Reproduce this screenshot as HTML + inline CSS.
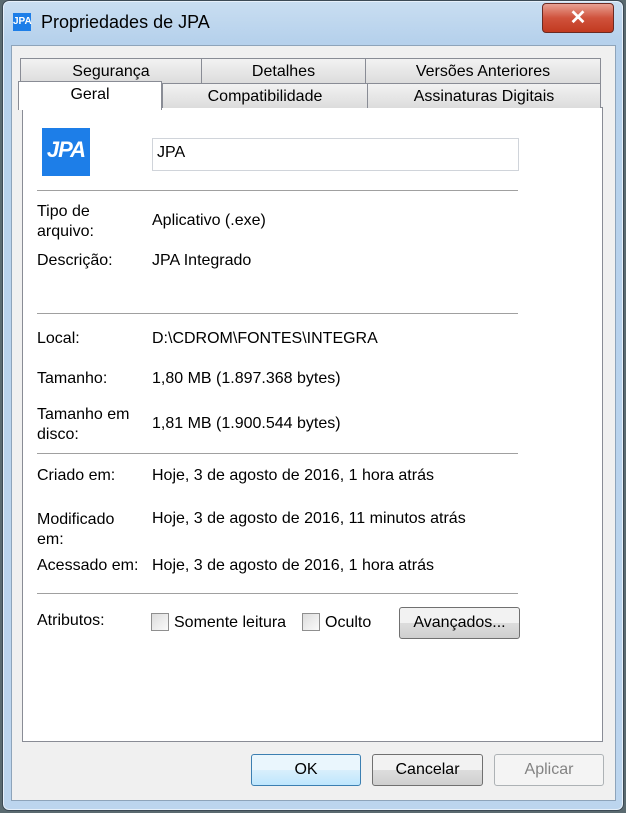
<!DOCTYPE html><html><head><style>
body{margin:0;width:626px;height:813px;overflow:hidden;background:#5a6a70;font-family:"Liberation Sans",sans-serif;font-size:16px;color:#000}
.a{position:absolute}
.win{left:2px;top:0;width:620px;height:809px;border:1px solid #3c4a55;border-radius:7px;background:linear-gradient(#c9def1,#b6d1ec 40px,#bcd5ee);box-shadow:inset 0 0 0 1px #e6f0fa}
.body{left:11px;top:45px;width:603px;height:754px;background:#f0f0f0;border:1px solid #8ea4ba}
.tab{background:linear-gradient(#f2f2f2,#dcdcdc);border:1px solid #898c95;border-bottom:none;text-align:center;line-height:26px;height:24px}
.panel{left:22px;top:107px;width:579px;height:633px;background:#fff;border:1px solid #898c95}
.hr{height:1px;background:#a0a0a0;left:37px;width:481px}
.btn{border:1px solid #707070;border-radius:3px;background:linear-gradient(#f2f2f2 50%,#dddddd 50%,#cfcfcf);text-align:center;line-height:30px;height:30px}
.cb{width:16px;height:16px;border:1px solid #8f8f8f;background:linear-gradient(135deg,#dcdcdc,#fbfbfb)}
</style></head><body>
<div class="a win"></div>
<div class="a" style="left:13px;top:13px;width:18px;height:18px;background:#1d7ee8;color:#fff;font-weight:bold;font-size:10px;line-height:18px;text-align:center">JPA</div>
<div class="a" style="left:41px;top:12px;font-size:18px">Propriedades de JPA</div>
<div class="a" style="left:542px;top:3px;width:70px;height:28px;border:1px solid #6b2a22;border-radius:4px;background:linear-gradient(#e8a193,#d0523c 50%,#c23a20);color:#fff;font-weight:bold;font-size:20px;text-align:center;line-height:28px">✕</div>
<div class="a body"></div>
<div class="a panel"></div>
<div class="a tab" style="left:20px;top:58px;width:180px">Segurança</div>
<div class="a tab" style="left:201px;top:58px;width:163px">Detalhes</div>
<div class="a tab" style="left:365px;top:58px;width:234px">Versões Anteriores</div>
<div class="a tab" style="left:162px;top:83px;width:204px">Compatibilidade</div>
<div class="a tab" style="left:367px;top:83px;width:232px">Assinaturas Digitais</div>
<div class="a" style="left:18px;top:81px;width:142px;height:28px;background:#fff;border:1px solid #898c95;border-bottom:none;text-align:center;line-height:26px">Geral</div>
<div class="a" style="left:42px;top:128px;width:48px;height:48px;background:#1d7ee8;color:#fff;font-weight:bold;font-style:italic;font-size:22px;line-height:44px;text-align:center;letter-spacing:-1px">JPA</div>
<div class="a" style="left:152px;top:138px;width:367px;height:33px;border:1px solid #d0d4da;line-height:28px;padding-left:4px;box-sizing:border-box">JPA</div>
<div class="a hr" style="top:190px"></div>
<div class="a" style="left:37px;top:202px;line-height:20px">Tipo de<br>arquivo:</div>
<div class="a" style="left:152px;top:212px">Aplicativo (.exe)</div>
<div class="a" style="left:37px;top:252px">Descrição:</div>
<div class="a" style="left:152px;top:252px">JPA Integrado</div>
<div class="a hr" style="top:313px"></div>
<div class="a" style="left:37px;top:330px">Local:</div>
<div class="a" style="left:152px;top:330px">D:\CDROM\FONTES\INTEGRA</div>
<div class="a" style="left:37px;top:370px">Tamanho:</div>
<div class="a" style="left:152px;top:370px">1,80 MB (1.897.368 bytes)</div>
<div class="a" style="left:37px;top:405px;line-height:20px">Tamanho em<br>disco:</div>
<div class="a" style="left:152px;top:415px">1,81 MB (1.900.544 bytes)</div>
<div class="a hr" style="top:453px"></div>
<div class="a" style="left:37px;top:467px">Criado em:</div>
<div class="a" style="left:152px;top:467px">Hoje, 3 de agosto de 2016, 1 hora atrás</div>
<div class="a" style="left:37px;top:510px;line-height:20px">Modificado<br>em:</div>
<div class="a" style="left:152px;top:510px">Hoje, 3 de agosto de 2016, 11 minutos atrás</div>
<div class="a" style="left:37px;top:557px">Acessado em:</div>
<div class="a" style="left:152px;top:557px">Hoje, 3 de agosto de 2016, 1 hora atrás</div>
<div class="a hr" style="top:593px"></div>
<div class="a" style="left:37px;top:612px">Atributos:</div>
<div class="a cb" style="left:151px;top:613px"></div>
<div class="a" style="left:174px;top:614px">Somente leitura</div>
<div class="a cb" style="left:302px;top:613px"></div>
<div class="a" style="left:325px;top:614px">Oculto</div>
<div class="a btn" style="left:399px;top:607px;width:119px">Avançados...</div>
<div class="a btn" style="left:251px;top:754px;width:108px;border-color:#3c7fb1;background:linear-gradient(#eaf6fd 50%,#d9effc 50%,#bee6fd)">OK</div>
<div class="a btn" style="left:372px;top:754px;width:109px">Cancelar</div>
<div class="a btn" style="left:494px;top:754px;width:108px;border-color:#adb2b5;background:#f4f4f4;color:#838383">Aplicar</div>
</body></html>
